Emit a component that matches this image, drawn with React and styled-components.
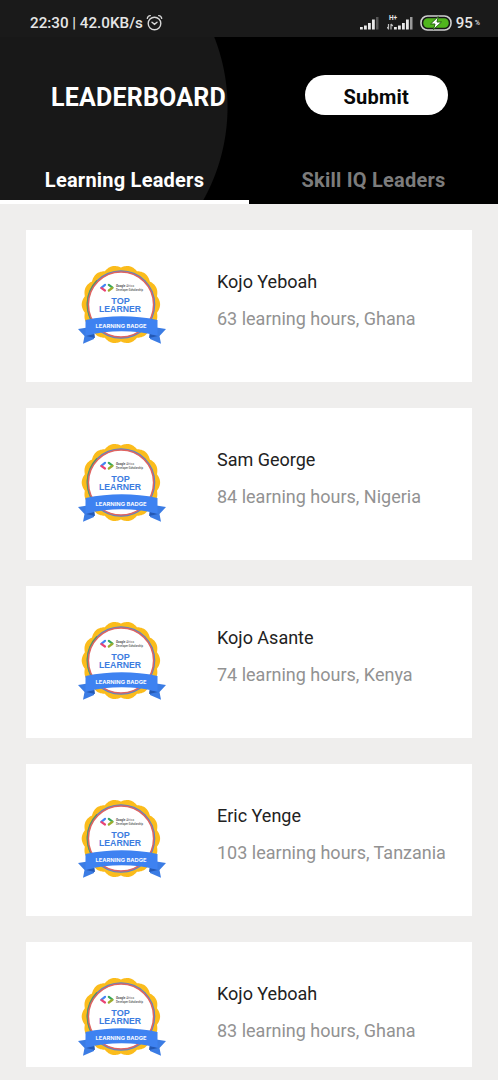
import React from 'react';
import styled, { createGlobalStyle } from 'styled-components';

const GlobalStyle = createGlobalStyle`
  * { box-sizing: border-box; }
  body { margin: 0; background: #efeeed; font-family: Roboto, sans-serif; }
`;

const Screen = styled.main`
  width: 498px;
  height: 1080px;
  overflow: hidden;
  display: flex;
  flex-direction: column;
  background: #efeeed;
`;

const StatusBar = styled.div`
  height: 37px;
  flex: none;
  padding: 9px 18px 0 30px;
  display: flex;
  align-items: flex-start;
  justify-content: space-between;
  background: #1a1a1a;
  color: #e6e6e6;
`;

const StatusGroup = styled.div`
  display: flex;
  align-items: center;
  height: 28px;
`;

const StatusText = styled.span`
  font-size: ${(p) => p.$size}px;
  font-weight: 500;
  line-height: 28px;
  white-space: pre;
`;

const Header = styled.header`
  height: 166.6px;
  flex: none;
  display: flex;
  flex-direction: column;
  background: radial-gradient(circle at 36.5px 70px, #181818 190.5px, #000 191.5px);
`;

const TitleRow = styled.div`
  height: 121px;
  padding: 38px 50.5px 0 51px;
  display: flex;
  justify-content: space-between;
  align-items: flex-start;
`;

const Title = styled.h1`
  margin: 0;
  font-size: 25px;
  line-height: 45px;
  font-weight: 700;
  letter-spacing: 0.2px;
  color: #fff;
`;

const SubmitButton = styled.button`
  width: 142.5px;
  height: 40px;
  border: 0;
  border-radius: 20px;
  padding: 3px 0 0;
  background: #fff;
  color: #080808;
  font: 700 20px/38px Roboto, sans-serif;
  letter-spacing: 0.2px;
`;

const Tabs = styled.nav`
  flex: 1;
  display: flex;
`;

const Tab = styled.div`
  flex: 1;
  display: flex;
  justify-content: center;
  padding-top: 4px;
  font-size: 20px;
  line-height: 39px;
  font-weight: 700;
  letter-spacing: 0.22px;
  color: ${(p) => (p.$active ? '#fff' : '#7c7c7c')};
  border-bottom: 4px solid ${(p) => (p.$active ? '#fff' : 'transparent')};
`;

const List = styled.div`
  padding: 26px 26px 0 25.5px;
  display: flex;
  flex-direction: column;
  gap: 26px;
`;

const Card = styled.article`
  height: ${(p) => (p.$last ? 125 : 152.2)}px;
  flex: none;
  display: flex;
  align-items: flex-start;
  padding: 33px 0 0 51.5px;
  background: #fff;
`;

const Details = styled.div`
  padding: 4px 0 0 49px;
`;

const Name = styled.div`
  font-size: 18px;
  line-height: 30px;
  color: #222;
`;

const Hours = styled.div`
  margin-top: 7px;
  font-size: 18px;
  line-height: 30px;
  color: #929292;
  white-space: nowrap;
`;

const leaders = [
  ['Kojo Yeboah', '63 learning hours, Ghana'],
  ['Sam George', '84 learning hours, Nigeria'],
  ['Kojo Asante', '74 learning hours, Kenya'],
  ['Eric Yenge', '103 learning hours, Tanzania'],
  ['Kojo Yeboah', '83 learning hours, Ghana'],
];

const scallop = (() => {
  const points = [];
  for (let i = 0; i < 280; i += 1) {
    const a = (i / 280) * Math.PI * 2;
    const r = 37 + 2.2 * Math.abs(Math.sin(7 * (a + Math.PI / 2)));
    points.push(`${(43.9 + r * Math.cos(a)).toFixed(2)},${(41.5 + r * Math.sin(a)).toFixed(2)}`);
  }
  return points.join(' ');
})();

function Badge() {
  return (
    <svg width="91" height="86" viewBox="0 0 91 86" fontFamily="Roboto, sans-serif">
      <polygon points={scallop} fill="#fbbc1c" />
      <circle cx="44" cy="41.500" r="34.300" fill="#5985c9" />
      <path d="M20 17.500A34 34 0 0 0 18 62.700" fill="none" stroke="#57926b" strokeWidth="1.600" />
      <circle cx="44" cy="41.500" r="32.600" fill="#fff" stroke="#e06460" strokeWidth="1.500" />
      <path d="M28 21.800L24.300 24.800" stroke="#4285f4" strokeWidth="2.200" strokeLinecap="round" />
      <path d="M24.500 25.200L28 27.500" stroke="#e94375" strokeWidth="2.200" strokeLinecap="round" />
      <path d="M31.800 21.900L35.500 24.600" stroke="#36a85a" strokeWidth="2.200" strokeLinecap="round" />
      <path d="M35.200 25L31.800 27.500" stroke="#9eac2e" strokeWidth="2.200" strokeLinecap="round" />
      <text x="39" y="24.400" fontSize="3.300" fill="#555" textLength="18" lengthAdjust="spacingAndGlyphs"><tspan fontWeight="700">Google</tspan> Africa</text>
      <text x="39" y="28" fontSize="3" fontWeight="500" fill="#555" textLength="27" lengthAdjust="spacingAndGlyphs">Developer Scholarship</text>
      <g fontFamily="'Liberation Sans', sans-serif" fontWeight="700" fontSize="8.200" fill="#3c7ce0" textAnchor="middle">
        <text x="43.500" y="41.200" textLength="18.500" lengthAdjust="spacingAndGlyphs">TOP</text>
        <text x="43" y="49.100" textLength="42" lengthAdjust="spacingAndGlyphs">LEARNER</text>
      </g>
      <path d="M1 66L17 63.500V76L6 80.700L7.500 73ZM89 66L73 63.500V76L84 80.700L82.500 73Z" fill="#3b7ce4" />
      <path d="M9 73L18 75L17.500 71ZM81 73L72 75L72.500 71Z" fill="#2459b5" />
      <path d="M8.500 57Q45 49.500 80.500 57V72.500Q45 64 8.500 72.500Z" fill="#3e82f1" />
      <text x="44" y="64.500" textAnchor="middle" fontFamily="Inter, sans-serif" fontSize="5.200" fontWeight="700" fill="#f4f8ff" textLength="51" lengthAdjust="spacingAndGlyphs">LEARNING BADGE</text>
    </svg>
  );
}

function Alarm() {
  return (
    <svg width="18" height="18" viewBox="0 0 18 18" fill="none" stroke="#d8d8d8" strokeWidth="1.400" strokeLinecap="round">
      <circle cx="8.500" cy="9.500" r="6.300" />
      <path d="M1.300 4.300Q1.800 1.800 4.300 1.600M15.700 4.300Q15.200 1.800 12.700 1.600M6 8.200L8.500 10.300L11 8.200" />
    </svg>
  );
}

function SignalBars({ network }) {
  return (
    <svg width={network ? 27 : 20} height="18" viewBox={network ? '-7 0 27 18' : '0 0 20 18'} fill="#e8e8e8">
      <path d="M0 13h2.800v2.500H0zM4 11.500h2.800v4H4zM8 9h2.800v6.500H8zM12 5.500h2.800v10H12z" />
      <path d="M16 3h2.500v12.500H16z" fill={network ? '#999' : '#555'} />
      {network && (
        <>
          <text x="-5" y="5.500" fontSize="6.500" fontWeight="700" fontFamily="Roboto, sans-serif">H+</text>
          <path d="M-5.500 10v5.500M-7 13l1.500 2M-3 15.500v-5.500M-3 10l1.800 2" stroke="#bbb" strokeWidth="1.200" />
        </>
      )}
    </svg>
  );
}

function Battery() {
  return (
    <svg width="32" height="16" viewBox="0 0 32 16">
      <rect x="1" y="1" width="30" height="14" rx="6.500" fill="#171717" stroke="#d0d0d0" strokeWidth="1.600" />
      <rect x="3.300" y="3.300" width="25.400" height="9.400" rx="4.500" fill="#50b51d" />
      <path d="M18.300 1.500L10.500 9H15L13.500 14.500L21.500 7H17Z" fill="#fff" stroke="#24630e" strokeWidth="1" />
    </svg>
  );
}

const Spacer = styled.span`
  width: ${(p) => p.$width}px;
`;

export default function App() {
  return (
    <Screen>
      <GlobalStyle />
      <StatusBar>
        <StatusGroup>
          <StatusText $size={15.2}>22:30 | 42.0KB/s</StatusText>
          <Spacer $width={3} />
          <Alarm />
        </StatusGroup>
        <StatusGroup>
          <SignalBars />
          <Spacer $width={7} />
          <SignalBars network />
          <Spacer $width={6} />
          <Battery />
          <Spacer $width={4} />
          <StatusText $size={15}>95</StatusText>
          <Spacer $width={2} />
          <StatusText $size={7}>%</StatusText>
        </StatusGroup>
      </StatusBar>
      <Header>
        <TitleRow>
          <Title>LEADERBOARD</Title>
          <SubmitButton>Submit</SubmitButton>
        </TitleRow>
        <Tabs>
          <Tab $active>Learning Leaders</Tab>
          <Tab>Skill IQ Leaders</Tab>
        </Tabs>
      </Header>
      <List>
        {leaders.map(([name, hours], i) => (
          <Card key={hours} $last={i === leaders.length - 1}>
            <Badge />
            <Details>
              <Name>{name}</Name>
              <Hours>{hours}</Hours>
            </Details>
          </Card>
        ))}
      </List>
    </Screen>
  );
}
